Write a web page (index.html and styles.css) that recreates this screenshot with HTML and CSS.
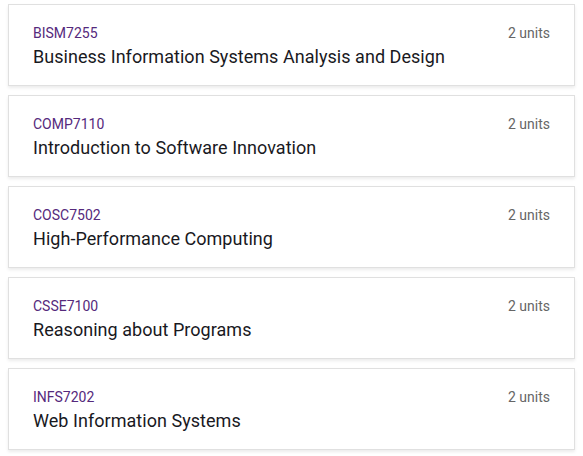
FILE: index.html
```html
<!DOCTYPE html>
<html lang="en">

<head>
    <meta charset="UTF-8">
    <meta name="viewport" content="width=device-width, initial-scale=1.0">
    <title>Courses</title>
    <link rel="stylesheet" href="styles.css">
</head>

<body>
    <div class="course-list">
        <div class="course">
            <div class="course-top">
                <span class="course-code">BISM7255</span>
                <span class="course-units">2 units</span>
            </div>
            <div class="course-title">Business Information Systems Analysis and Design</div>
        </div>
        <div class="course">
            <div class="course-top">
                <span class="course-code">COMP7110</span>
                <span class="course-units">2 units</span>
            </div>
            <div class="course-title">Introduction to Software Innovation</div>
        </div>
        <div class="course">
            <div class="course-top">
                <span class="course-code">COSC7502</span>
                <span class="course-units">2 units</span>
            </div>
            <div class="course-title">High-Performance Computing</div>
        </div>
        <div class="course">
            <div class="course-top">
                <span class="course-code">CSSE7100</span>
                <span class="course-units">2 units</span>
            </div>
            <div class="course-title">Reasoning about Programs</div>
        </div>
        <div class="course">
            <div class="course-top">
                <span class="course-code">INFS7202</span>
                <span class="course-units">2 units</span>
            </div>
            <div class="course-title">Web Information Systems</div>
        </div>
    </div>
</body>

</html>
```

FILE: styles.css
```css
body {
    font-family: Roboto, "Liberation Sans", sans-serif;
    margin: 0;
    padding: 4px 8px;
    background-color: #fff;
}
.course-list {
    display: flex;
    flex-direction: column;
    gap: 9px;
}
.course {
    height: 82px;
    box-sizing: border-box;
    padding: 18px 24px 0 24px;
    background-color: #fff;
    border: 1px solid #e0e0e0;
    box-shadow: 0 2px 3px rgba(0, 0, 0, 0.08);
}
.course-top {
    display: flex;
    justify-content: space-between;
    align-items: baseline;
    line-height: 20px;
}
.course-code {
    font-size: 14px;
    color: #55297c;
}
.course-units {
    font-size: 14px;
    color: #666;
}
.course-title {
    margin-top: 2px;
    font-size: 18px;
    line-height: 24px;
    letter-spacing: 0.04px;
    color: #19191e;
}
```
